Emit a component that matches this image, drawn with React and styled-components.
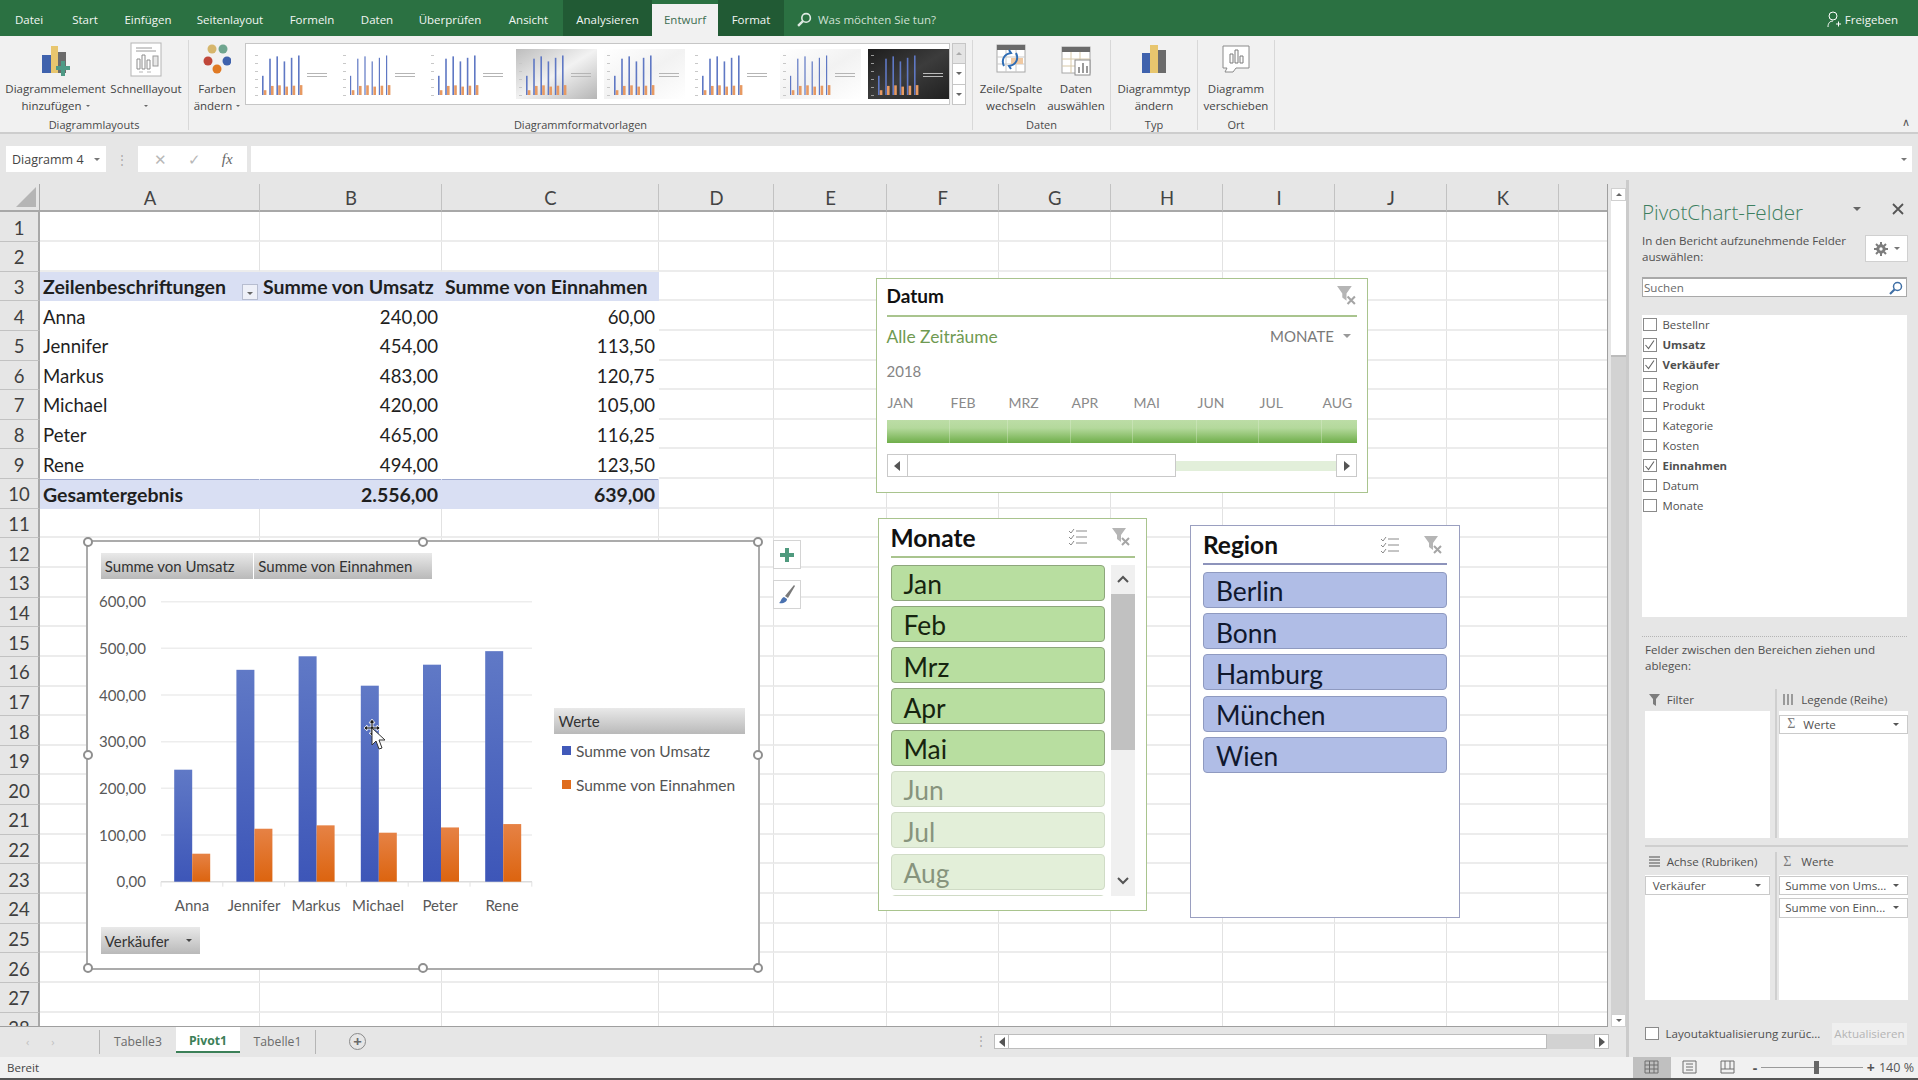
import React from 'react';
import styled, { createGlobalStyle } from 'styled-components';

const uiFont = `"Open Sans", "Noto Sans", sans-serif`;
const cellFont = `Lato, "Liberation Sans", sans-serif`;

const GlobalStyle = createGlobalStyle`
  * { box-sizing: border-box; }
  html, body { margin: 0; padding: 0; background: #e6e6e6; }
  body { width: 1918px; height: 1080px; overflow: hidden; font-family: ${uiFont}; }
`;

const Page = styled.div`
  width: 1918px;
  height: 1080px;
  display: flex;
  flex-direction: column;
  overflow: hidden;
`;

/* ---------- title tabs ---------- */
const TabBar = styled.div`
  height: 36px;
  display: flex;
  background: #2b7142;
  color: #f2f6f3;
  font-size: 11.5px;
  flex: none;
`;

const MenuTab = styled.div`
  width: ${(p) => p.$w}px;
  display: flex;
  align-items: center;
  justify-content: center;
  padding-top: 2px;
  background: ${(p) => (p.$tone === 'dark' ? '#215a34' : 'transparent')};
  ${(p) => p.$tone === 'active' && `
    background: #f1f1f1;
    color: #3e6e52;
    margin-top: 4px;
    padding-top: 0;
    padding-bottom: 2px;
  `}
`;

const TellMe = styled.div`
  display: flex;
  align-items: center;
  gap: 6px;
  margin-left: 13px;
  padding-top: 2px;
  color: #cfe0d4;
  flex: 1;
`;

const Share = styled.div`
  display: flex;
  align-items: center;
  gap: 4px;
  margin-right: 20px;
  padding-top: 2px;
`;

/* ---------- ribbon ---------- */
const Ribbon = styled.div`
  height: 98px;
  flex: none;
  display: flex;
  background: #f1f1f1;
  border-bottom: 2px solid #cdcdcd;
  padding-top: 4px;
  color: #444;
  position: relative;
`;

const RibbonGroup = styled.div`
  width: ${(p) => p.$w}px;
  height: 90px;
  display: flex;
  flex-direction: column;
  border-right: 1px solid #d8d8d8;
`;

const GroupBody = styled.div`
  height: 72px;
  display: flex;
  align-items: flex-start;
  padding-left: ${(p) => p.$pad || 0}px;
  gap: ${(p) => p.$gap || 0}px;
`;

const GroupLabel = styled.div`
  flex: 1;
  text-align: center;
  font-size: 11px;
  line-height: 17px;
  padding-top: 4px;
  color: #4a4a4a;
`;

const RibbonButton = styled.div`
  width: ${(p) => p.$w}px;
  display: flex;
  flex-direction: column;
  align-items: center;
  font-size: 11.5px;
  line-height: 17px;
  text-align: center;
  white-space: nowrap;
`;

const ButtonLine = styled.span`
  display: flex;
  align-items: center;
  justify-content: center;
  gap: 4px;
  height: 17px;
`;

const IconSlot = styled.div`
  height: 39px;
  display: flex;
  align-items: flex-end;
  justify-content: center;
  margin-bottom: 1px;
  padding-bottom: ${(p) => p.$lift || 0}px;
`;

const Gallery = styled.div`
  width: 721px;
  height: 62px;
  margin-top: 3px;
  display: flex;
`;

const GalleryStrip = styled.div`
  width: 705px;
  display: flex;
  align-items: center;
  gap: 7px;
  padding-left: 6px;
  background: #fff;
  border: 1px solid #c6c6c6;
`;

const GalleryScroll = styled.div`
  flex: 1;
  margin-left: 2px;
  display: flex;
  flex-direction: column;
  border: 1px solid #c6c6c6;
  background: #fff;
`;

const GalleryStep = styled.div`
  flex: 1;
  display: flex;
  align-items: center;
  justify-content: center;
  background: ${(p) => (p.$off ? '#e4e4e4' : '#fff')};
  & + & { border-top: 1px solid #c6c6c6; }
`;

const Caret = styled.span`
  display: inline-block;
  width: 0;
  height: 0;
  border-left: ${(p) => p.$size || 4}px solid transparent;
  border-right: ${(p) => p.$size || 4}px solid transparent;
  ${(p) => (p.$up ? 'border-bottom' : 'border-top')}: ${(p) => p.$size || 4}px solid ${(p) => p.$color || '#666'};
  flex: none;
`;

const Collapse = styled.div`
  position: absolute;
  right: 8px;
  bottom: 3px;
  font-size: 11px;
  color: #555;
`;

/* ---------- formula bar ---------- */
const FormulaBar = styled.div`
  height: 46px;
  flex: none;
  display: flex;
  align-items: flex-start;
  padding: 12px 0 0 6px;
  background: #e6e6e6;
`;

const NameBox = styled.div`
  width: 100px;
  height: 26px;
  background: #fff;
  display: flex;
  align-items: center;
  justify-content: space-between;
  padding: 0 6px;
  font-size: 12.5px;
  color: #444;
`;

const Dots = styled.div`
  width: 32px;
  height: 26px;
  display: flex;
  align-items: center;
  justify-content: center;
  color: #aaa;
  font-size: 12px;
  letter-spacing: 0;
`;

const FormulaTools = styled.div`
  width: 109px;
  height: 26px;
  background: #fff;
  display: flex;
  align-items: center;
  justify-content: space-around;
  padding: 0 4px 0 6px;
  color: #b8b8b8;
  font-size: 15px;
  margin-right: 4px;
`;

const FxLabel = styled.span`
  font-family: "Liberation Serif", serif;
  font-style: italic;
  color: #666;
  font-size: 15px;
`;

const FormulaInput = styled.div`
  width: 1661px;
  height: 26px;
  background: #fff;
  display: flex;
  align-items: center;
  justify-content: flex-end;
  padding-right: 5px;
`;

/* ---------- worksheet ---------- */
const Workspace = styled.div`
  height: 876.7px;
  flex: none;
  display: flex;
`;

const SheetArea = styled.div`
  width: 1626px;
  display: flex;
  flex-direction: column;
  padding-top: 4px;
`;

const SheetRow = styled.div`
  display: flex;
  height: 842.7px;
  flex: none;
`;

const SheetGrid = styled.div`
  position: relative;
  width: 1608px;
  height: 100%;
  overflow: hidden;
  background: #fff;
  border-right: 1px solid #9f9f9f;
  border-bottom: 1px solid #9f9f9f;
  display: grid;
  grid-template-columns: 40px 220px 182px 217px 115px 113px 111.5px 112.5px 112px 112px 112px 112px 49px;
  grid-template-rows: 28.3px repeat(28, 29.65px);
  align-content: start;
  font-family: ${cellFont};
`;

const Corner = styled.div`
  background: #e6e6e6;
  border-right: 1px solid #a8a8a8;
  border-bottom: 2px solid #a8a8a8;
  position: relative;
  &::after {
    content: '';
    position: absolute;
    right: 3px;
    bottom: 3px;
    border-left: 20px solid transparent;
    border-bottom: 20px solid #b5b5b5;
  }
`;

const ColHead = styled.div`
  background: #e6e6e6;
  border-right: 1px solid #c2c2c2;
  border-bottom: 2px solid #a8a8a8;
  display: flex;
  align-items: center;
  justify-content: center;
  padding: 1px 0 0 1px;
  font-size: 18.5px;
  color: #444;
`;

const RowHead = styled.div`
  background: #e6e6e6;
  border-right: 2px solid #a8a8a8;
  border-bottom: 1px solid #c2c2c2;
  display: flex;
  align-items: center;
  justify-content: center;
  padding-top: 2px;
  font-size: 18.5px;
  color: #3f3f3f;
`;

const cellFill = (p) => (p.$band ? '#d9dff3' : p.$plain ? '#fff' : null);

const Cell = styled.div`
  display: flex;
  align-items: center;
  justify-content: ${(p) => (p.$right ? 'flex-end' : 'flex-start')};
  padding: 3px 3px 0;
  font-size: ${(p) => (p.$bold ? 19.5 : 18.6)}px;
  white-space: nowrap;
  color: #1f1f1f;
  font-weight: ${(p) => (p.$bold ? 700 : 400)};
  background: ${(p) => cellFill(p) || 'transparent'};
  border-right: 1px solid ${(p) => cellFill(p) || '#e2e2e2'};
  border-bottom: 2px solid ${(p) => cellFill(p) || '#ececec'};
  ${(p) => p.$topRule && 'box-shadow: inset 0 1px 0 #a0abd0;'}
  position: relative;
`;

const FilterChip = styled.span`
  position: absolute;
  right: 1px;
  top: 12px;
  width: 16px;
  height: 16px;
  background: #eef0f8;
  border: 1px solid #b7bdd0;
  display: flex;
  align-items: center;
  justify-content: center;
  padding-top: 3px;
`;

const VScroll = styled.div`
  width: 15px;
  margin-left: 3px;
  margin-top: 4px;
  display: flex;
  flex-direction: column;
  background: #d2d2d2;
`;

const ScrollStep = styled.div`
  height: 13px;
  flex: none;
  background: #fff;
  border: 1px solid #d0d0d0;
  display: flex;
  align-items: center;
  justify-content: center;
`;

const VThumb = styled.div`
  height: 156px;
  flex: none;
  background: #fff;
  border-bottom: 2px solid #bcbcbc;
`;

const Spring = styled.div`
  flex: 1;
`;

/* ---------- pivot chart ---------- */
const ChartBox = styled.div`
  position: absolute;
  left: 86.4px;
  top: 356px;
  width: 674px;
  height: 429.5px;
  background: #fff;
  border: 2px solid #ababab;
  padding: 10.7px 0 0 12.4px;
  display: flex;
  flex-direction: column;
`;

const Handle = styled.div`
  position: absolute;
  left: ${(p) => p.$x}%;
  top: ${(p) => p.$y}%;
  width: 10px;
  height: 10px;
  transform: translate(-50%, -50%);
  border: 2px solid #8f8f8f;
  border-radius: 50%;
  background: #fff;
`;

const FieldRow = styled.div`
  display: flex;
  gap: 1.5px;
  height: 26.3px;
  flex: none;
`;

const FieldButton = styled.div`
  width: ${(p) => p.$w}px;
  height: ${(p) => p.$h || 26.3}px;
  flex: none;
  display: flex;
  align-items: center;
  justify-content: space-between;
  padding: 0 ${(p) => p.$pr || 4}px 0 4px;
  background: linear-gradient(#e9e9e9, #b9b9b9);
  font-size: 15px;
  color: #333;
  white-space: nowrap;
`;

const PlotRow = styled.div`
  display: flex;
  height: 335px;
  margin-top: 6px;
  flex: none;
`;

const PlotSvg = styled.svg`
  flex: none;
  overflow: visible;
  font-family: ${cellFont};
`;

const Legend = styled.div`
  margin-left: 13.7px;
  padding-top: 122.7px;
  display: flex;
  flex-direction: column;
`;

const LegendItem = styled.div`
  display: flex;
  align-items: center;
  gap: 5px;
  margin: ${(p) => p.$mt}px 0 0 8px;
  height: 20px;
  font-size: 15.5px;
  color: #555;
  white-space: nowrap;
`;

const LegendSwatch = styled.span`
  width: 8.5px;
  height: 9px;
  background: ${(p) => p.$color};
`;

const AxisButtonWrap = styled.div`
  margin-top: 7px;
`;

const ChartTool = styled.div`
  position: absolute;
  left: 773px;
  top: ${(p) => p.$top}px;
  width: 28px;
  height: 29px;
  background: #fff;
  border: 1px solid #d4d4d4;
  display: flex;
  align-items: center;
  justify-content: center;
`;

const PointerLayer = styled.svg`
  position: absolute;
  left: 364px;
  top: 534px;
`;

/* ---------- slicers ---------- */
const Slicer = styled.div`
  position: absolute;
  left: ${(p) => p.$x}px;
  top: ${(p) => p.$y}px;
  width: ${(p) => p.$w}px;
  height: ${(p) => p.$h}px;
  background: #fff;
  border: 1.5px solid ${(p) => p.$line};
  padding: 0 ${(p) => p.$pad || 11.5}px;
  display: flex;
  flex-direction: column;
  overflow: hidden;
`;

const SlicerHead = styled.div`
  height: ${(p) => p.$h}px;
  flex: none;
  display: flex;
  align-items: center;
  justify-content: space-between;
  border-bottom: 2px solid ${(p) => p.$line};
  padding-bottom: ${(p) => p.$pb || 0}px;
  font-weight: 700;
  font-size: ${(p) => p.$size}px;
  color: #111;
`;

const SlicerTools = styled.div`
  display: flex;
  align-items: center;
  gap: 24px;
  margin-right: 4px;
`;

const PeriodRow = styled.div`
  display: flex;
  justify-content: space-between;
  align-items: center;
  margin-top: 9px;
  height: 20px;
  font-size: 17.4px;
  color: #6f9a52;
`;

const LevelPick = styled.div`
  display: flex;
  align-items: center;
  gap: 9px;
  font-size: 15px;
  color: #7a7a7a;
  margin-right: 6px;
`;

const YearLabel = styled.div`
  margin-top: 15px;
  height: 20px;
  line-height: 20px;
  font-size: 15px;
  color: #858585;
`;

const MonthRow = styled.div`
  height: 20px;
  margin-top: 13px;
  padding-left: 1px;
  font-size: 14px;
  color: #8a8a8a;
  display: grid;
  grid-template-columns: 63px 58px 63px 62px 64px 62px 63px 1fr;
`;

const MonthBar = styled.div`
  margin-top: 6px;
  height: 23px;
  flex: none;
  display: grid;
  grid-template-columns: 63px 58px 63px 62px 64px 62px 63px 1fr;
  background: linear-gradient(#bcdda6, #b4d99c 35%, #6fae4a);
`;

const MonthTick = styled.div`
  border-right: 1px solid rgba(225, 240, 214, 0.35);
  &:last-child { border-right: none; }
`;

const TimeScroll = styled.div`
  margin-top: 11px;
  height: 23px;
  flex: none;
  display: flex;
  align-items: center;
`;

const TimeButton = styled.div`
  width: 21px;
  height: 23px;
  flex: none;
  background: #fff;
  border: 1px solid #c9c9c9;
  display: flex;
  align-items: center;
  justify-content: center;
`;

const TimeThumb = styled.div`
  width: 268px;
  height: 23px;
  background: #fff;
  border: 1px solid #c9c9c9;
  border-left: none;
`;

const TimeTrack = styled.div`
  flex: 1;
  height: 10px;
  background: #e2efda;
`;

const SideArrow = styled.span`
  display: inline-block;
  width: 0;
  height: 0;
  border-top: 5px solid transparent;
  border-bottom: 5px solid transparent;
  ${(p) => (p.$left ? 'border-right' : 'border-left')}: 6px solid #555;
`;

const SlicerBody = styled.div`
  display: flex;
  gap: 6px;
  margin-top: 7px;
  flex: none;
  height: 331px;
  overflow: hidden;
`;

const ItemList = styled.div`
  width: ${(p) => p.$w}px;
  display: flex;
  flex-direction: column;
  gap: 5.3px;
`;

const SlicerItem = styled.div`
  height: 36px;
  flex: none;
  display: flex;
  align-items: center;
  padding: 3px 0 0 12px;
  border-radius: 4px;
  background: ${(p) => p.$bg};
  border: 1px solid ${(p) => p.$line};
  font-size: 26.4px;
  color: ${(p) => p.$color};
`;

const ItemScroll = styled.div`
  width: 24.4px;
  display: flex;
  flex-direction: column;
  background: #f0f0f0;
  align-items: center;
`;

const ItemStep = styled.div`
  height: ${(p) => p.$h}px;
  flex: none;
  display: flex;
  align-items: center;
  justify-content: center;
  width: 100%;
`;

const ItemThumb = styled.div`
  width: 100%;
  height: 156px;
  flex: none;
  background: #c1c1c1;
`;

/* ---------- field panel ---------- */
const Panel = styled.div`
  width: 292px;
  border-left: 3px solid #cbcbcb;
  background: #e6e6e6;
  padding-left: 13px;
  display: flex;
  flex-direction: column;
  color: #505050;
  font-size: 11.6px;
  position: relative;
`;

const PanelTitleRow = styled.div`
  height: 24px;
  margin-top: 20px;
  display: flex;
  align-items: center;
  justify-content: space-between;
  padding-right: 14px;
  flex: none;
`;

const PanelTitle = styled.div`
  font-size: 20.7px;
  font-weight: 300;
  color: #3d7f5f;
  white-space: nowrap;
`;

const PanelActions = styled.div`
  display: flex;
  align-items: center;
  gap: 31px;
  margin-top: -7px;
`;

const IntroRow = styled.div`
  margin-top: 9px;
  height: 32px;
  display: flex;
  justify-content: space-between;
  padding-right: 10px;
  flex: none;
`;

const Intro = styled.div`
  line-height: 16px;
  white-space: nowrap;
`;

const GearButton = styled.div`
  width: 43px;
  height: 27px;
  margin-top: 2px;
  background: #fff;
  border: 1px solid #d0d0d0;
  display: flex;
  align-items: center;
  justify-content: center;
  gap: 6px;
`;

const SearchBox = styled.div`
  width: 265px;
  height: 20px;
  margin-top: 12px;
  flex: none;
  background: #fff;
  border: 1px solid #a9a9a9;
  border-top-width: 2px;
  display: flex;
  align-items: center;
  justify-content: space-between;
  padding: 0 3px 0 1px;
  color: #6a6a6a;
`;

const FieldList = styled.div`
  width: 265px;
  height: 302px;
  margin-top: 17.7px;
  flex: none;
  background: #fff;
  padding-left: 1px;
  display: flex;
  flex-direction: column;
`;

const FieldItem = styled.div`
  height: 20.1px;
  flex: none;
  display: flex;
  align-items: center;
  gap: 6px;
  font-size: 11.4px;
  font-weight: ${(p) => (p.$on ? 700 : 400)};
  color: #4f4f4f;
`;

const Check = styled.span`
  width: 13.5px;
  height: 13.5px;
  flex: none;
  background: #fff;
  border: 1px solid #8a8a8a;
  display: flex;
  align-items: center;
  justify-content: center;
`;

const DottedRule = styled.div`
  width: 265px;
  margin-top: 19px;
  height: 1px;
  flex: none;
  border-top: 1px dotted #b5b5b5;
`;

const HintText = styled.div`
  margin: 5px 0 0 3px;
  line-height: 16px;
  flex: none;
  white-space: nowrap;
`;

const AreaGrid = styled.div`
  display: grid;
  grid-template-columns: 125.5px 133px;
  column-gap: 5px;
  margin: 15px 0 0 2.7px;
  flex: none;
`;

const AreaBlock = styled.div`
  display: flex;
  flex-direction: column;
  ${(p) => p.$side && 'border-left: 2px solid #cfcfcf; padding-left: 2px;'}
`;

const AreaLabel = styled.div`
  height: ${(p) => p.$h}px;
  display: flex;
  align-items: center;
  gap: 7px;
  padding: 0 0 ${(p) => p.$pb || 0}px 4px;
  white-space: nowrap;
  flex: none;
`;

const AreaWell = styled.div`
  height: ${(p) => p.$h}px;
  background: #fff;
  display: flex;
  flex-direction: column;
  gap: 3px;
  padding-top: ${(p) => p.$pt}px;
  flex: none;
`;

const AreaItem = styled.div`
  height: 19.5px;
  flex: none;
  display: flex;
  align-items: center;
  justify-content: space-between;
  background: #fff;
  border: 1px solid #cacaca;
  padding: 0 8px 0 ${(p) => p.$pl || 7}px;
  white-space: nowrap;
`;

const AreaItemText = styled.span`
  display: flex;
  gap: 5px;
  align-items: center;
`;

const AreaRule = styled.div`
  grid-column: 1 / -1;
  height: 2px;
  margin: 7px 0 5px;
  background: #cfcfcf;
`;

const PanelFoot = styled.div`
  margin: 23px 0 0 3px;
  width: 262px;
  display: flex;
  align-items: center;
  justify-content: space-between;
  flex: none;
`;

const FootLabel = styled.div`
  display: flex;
  align-items: center;
  gap: 7px;
  white-space: nowrap;
`;

const RefreshButton = styled.div`
  width: 75px;
  height: 22px;
  background: #efefef;
  color: #b5b5b5;
  display: flex;
  align-items: center;
  justify-content: center;
`;

/* ---------- sheet tabs ---------- */
const TabStrip = styled.div`
  height: 30px;
  flex: none;
  display: flex;
  align-items: center;
  background: #e6e6e6;
  color: #6b6b6b;
  font-size: 12.2px;
`;

const NavArrows = styled.div`
  width: 100px;
  display: flex;
  gap: 22px;
  padding-left: 26px;
  color: #c0c0c0;
  font-size: 11px;
  border-right: 1px solid #b5b5b5;
  height: 24px;
  align-items: center;
`;

const SheetTab = styled.div`
  width: ${(p) => p.$w}px;
  height: 30px;
  display: flex;
  align-items: center;
  justify-content: center;
  ${(p) => p.$active && `
    background: #fff;
    color: #3c8058;
    font-weight: 700;
    border-bottom: 2px solid #3c8058;
    height: 26px;
    padding-top: 3px;
    align-self: flex-start;
  `}
`;

const TabDivider = styled.div`
  width: 1px;
  height: 24px;
  background: #b5b5b5;
`;

const AddSheet = styled.div`
  margin-left: 33px;
  width: 17px;
  height: 17px;
  border: 1.5px solid #8a8a8a;
  border-radius: 50%;
  display: flex;
  align-items: center;
  justify-content: center;
  font-size: 15px;
  line-height: 1;
  color: #6a6a6a;
  font-weight: 700;
`;

const HScroll = styled.div`
  width: 615px;
  margin-left: auto;
  margin-right: 17px;
  display: flex;
  align-items: center;
  position: relative;
  height: 15px;
  background: #d2d2d2;
`;

const HDots = styled.div`
  position: absolute;
  left: -19px;
  top: 0;
  color: #a8a8a8;
  font-size: 12px;
  line-height: 13px;
`;

const HButton = styled.div`
  width: 15px;
  height: 15px;
  flex: none;
  background: #fff;
  border: 1px solid #bdbdbd;
  display: flex;
  align-items: center;
  justify-content: center;
`;

const HThumb = styled.div`
  width: 538px;
  height: 15px;
  background: #fff;
  border: 1px solid #bdbdbd;
  border-left: none;
`;

const HTrack = styled.div`
  flex: 1;
`;

/* ---------- status bar ---------- */
const StatusBar = styled.div`
  flex: 1;
  display: flex;
  align-items: center;
  background: #f1f1f1;
  border-bottom: 2px solid #555;
  padding-left: 7px;
  font-size: 11.5px;
  color: #444;
`;

const StatusRight = styled.div`
  margin-left: auto;
  display: flex;
  align-items: center;
  height: 100%;
  color: #555;
`;

const ViewButton = styled.div`
  width: 38px;
  height: 100%;
  display: flex;
  align-items: center;
  justify-content: center;
  background: ${(p) => (p.$active ? '#c0c0c0' : 'transparent')};
`;

const Zoomer = styled.div`
  display: flex;
  align-items: center;
  width: 122px;
  margin-left: 6px;
  font-size: 14px;
  font-weight: 700;
  gap: 4px;
`;

const ZoomTrack = styled.div`
  flex: 1;
  height: 1px;
  background: #9a9a9a;
  position: relative;
`;

const ZoomKnob = styled.div`
  position: absolute;
  left: 53px;
  top: -6px;
  width: 5px;
  height: 13px;
  background: #666;
`;

const ZoomValue = styled.div`
  width: 43.3px;
  text-align: right;
  padding-right: 4px;
  font-size: 12.5px;
  white-space: nowrap;
`;

/* ---------- drawings ---------- */
const sellers = ['Anna', 'Jennifer', 'Markus', 'Michael', 'Peter', 'Rene'];
const umsatz = [240, 454, 483, 420, 465, 494];
const einnahmen = [60, 113.5, 120.75, 105, 116.25, 123.5];

const PlusBars = () => (
  <svg width="30" height="33" viewBox="0 0 30 33">
    <rect x="1" y="11" width="9" height="18" fill="#3f62ad" />
    <rect x="10" y="2" width="7" height="27" fill="#e8c66e" />
    <rect x="17" y="8" width="8" height="21" fill="#6b6b6b" />
    <path d="M20 17h4v5h5v4h-5v6h-4v-6h-5v-4h5z" fill="#4f9a86" />
  </svg>
);

const QuickLayout = () => (
  <svg width="32" height="35" viewBox="0 0 32 35">
    <rect x="1" y="1" width="30" height="33" fill="#fff" stroke="#b5b5b5" />
    <path d="M6 6h16M6 9h20" stroke="#9a9a9a" />
    <path d="M7 27V17h3v10zM12 27V13h3v14zM17 27V18h3v9z" fill="#fff" stroke="#8c8c8c" />
    <rect x="23" y="14" width="5" height="10" fill="#e8e8e8" stroke="#9a9a9a" />
    <path d="M9 30h4M17 30h4" stroke="#b5b5b5" />
  </svg>
);

const Palette = () => (
  <svg width="28" height="33" viewBox="0 0 28 33">
    <circle cx="9" cy="7" r="4.5" fill="#d6b66c" />
    <circle cx="20" cy="7" r="4.5" fill="#6fa58f" />
    <circle cx="5" cy="19" r="4.5" fill="#c0473a" />
    <circle cx="24" cy="19" r="4.5" fill="#3f62ad" />
    <circle cx="14" cy="27" r="4.5" fill="#e07a24" />
  </svg>
);

const SwapTable = () => (
  <svg width="30" height="29" viewBox="0 0 30 29">
    <rect x="1" y="1" width="28" height="27" fill="#fff" stroke="#a8a8a8" />
    <rect x="1" y="1" width="28" height="5" fill="#6a6a6a" />
    <path d="M1 13h28M1 20h28M10 6v22M20 6v22" stroke="#c9c9c9" />
    <rect x="15" y="14" width="12" height="6" fill="#f0c9a2" />
    <path d="M8 22c-3-6 0-12 7-13l-2-3M20 9c3 6 0 12-7 13l2 3" fill="none" stroke="#2f6db5" strokeWidth="2" />
  </svg>
);

const PickData = () => (
  <svg width="30" height="30" viewBox="0 0 30 30">
    <rect x="1" y="1" width="28" height="26" fill="#fff" stroke="#a8a8a8" />
    <rect x="1" y="1" width="28" height="5" fill="#6a6a6a" />
    <path d="M1 13h28M1 20h28M10 6v21M19 6v21" stroke="#d8c9a8" />
    <rect x="14" y="14" width="15" height="15" fill="#fff" stroke="#8c8c8c" />
    <path d="M17 27v-6h2v6zM21 27v-10h2v10zM25 27v-7h2v7z" fill="#9a9a9a" />
  </svg>
);

const TypeBars = () => (
  <svg width="24" height="28" viewBox="0 0 24 28">
    <rect x="0" y="8" width="8" height="20" fill="#3f62ad" />
    <rect x="8" y="0" width="8" height="28" fill="#e8c66e" />
    <rect x="16" y="5" width="8" height="23" fill="#6b6b6b" />
  </svg>
);

const MoveChart = () => (
  <svg width="28" height="28" viewBox="0 0 28 28">
    <path d="M1 1h26v22H14l-3 4H3l2-4H1z" fill="#fff" stroke="#8a8a8a" />
    <path d="M8 18V9h3v9zM13 18V5h3v13zM18 18v-7h3v7z" fill="#fff" stroke="#7a7a7a" />
  </svg>
);

const ThumbChart = ({ mode, spread }) => {
  const dark = mode === 'dark';
  const bg = dark ? '#2b2b2b' : mode === 'shade' ? '#d2d2d2' : '#fff';
  const id = `t${mode}${spread}`;
  return (
    <svg width="81" height="50" viewBox="0 0 81 50" style={{ flex: 'none' }}>
      <defs>
        <linearGradient id={id} x1="0" y1="0" x2="1" y2="1">
          <stop offset="0" stopColor={dark ? '#1d1d1d' : mode === 'shade' ? '#bdbdbd' : '#fff'} />
          <stop offset="0.5" stopColor={dark ? '#3c3c3c' : '#f2f2f2'} />
          <stop offset="1" stopColor={dark ? '#202020' : mode === 'shade' ? '#b5b5b5' : '#fff'} />
        </linearGradient>
      </defs>
      <rect width="81" height="50" fill={mode === 'plain' ? bg : `url(#${id})`} />
      {[6, 14, 22, 30, 38, 46].map((y) => (
        <rect key={y} x="3" y={y} width="3" height="1" fill={dark ? '#999' : '#c8c8c8'} />
      ))}
      {umsatz.map((v, i) => (
        <rect key={i} x={10 + i * 7.2} y={46 - v * 0.08} width={spread ? 1.2 : 1.6} height={v * 0.08} fill="#5f78c4" />
      ))}
      {einnahmen.map((v, i) => (
        <rect key={i} x={11.8 + i * 7.2} y={46 - v * 0.08} width="2.6" height={v * 0.08} fill="#e79a63" />
      ))}
      <path d="M55 24.5h20M55 27.5h20" stroke={dark ? '#bbb' : '#b5b5b5'} strokeWidth="1" />
    </svg>
  );
};

const MoveCursor = () => (
  <PointerLayer width="24" height="34" viewBox="0 0 24 34">
    <path d="M6 0l3 4H7v4h4V6l3 3-3 3v-2H7v4h2l-3 3-3-3h2v-4H1v2l-3-3 3-3v2h4V4H3z" fill="#1b1b1b" stroke="#fff" strokeWidth="0.8" transform="translate(2 1)" />
    <path d="M8 10v17l4-4 3 8 3-1-3-8h6z" fill="#fff" stroke="#333" strokeWidth="1" />
  </PointerLayer>
);

const PivotPlot = () => {
  const base = 296.7;
  const unit = 0.4667;
  return (
    <PlotSvg width="440" height="335" viewBox="0 0 440 335">
      <defs>
        <linearGradient id="blueBar" x1="0" y1="0" x2="0" y2="1">
          <stop offset="0" stopColor="#6079c6" />
          <stop offset="1" stopColor="#3d56b8" />
        </linearGradient>
        <linearGradient id="orangeBar" x1="0" y1="0" x2="0" y2="1">
          <stop offset="0" stopColor="#e68245" />
          <stop offset="1" stopColor="#dc640f" />
        </linearGradient>
      </defs>
      {[0, 100, 200, 300, 400, 500, 600].map((v) => (
        <g key={v}>
          <line x1="60" x2="431" y1={base - v * unit} y2={base - v * unit} stroke={v === 0 ? '#dcdcdc' : '#ededed'} strokeWidth="1.5" />
          <text x="45" y={base - v * unit + 5.5} textAnchor="end" fontSize="15" fill="#595959">
            {v},00
          </text>
        </g>
      ))}
      {[0, 1, 2, 3, 4, 5, 6].map((i) => (
        <line key={i} x1={60 + i * 61.8} x2={60 + i * 61.8} y1={base} y2={base + 5} stroke="#e2e2e2" />
      ))}
      {sellers.map((name, i) => (
        <g key={name}>
          <rect x={73.2 + i * 62.2} y={base - umsatz[i] * unit} width="18" height={umsatz[i] * unit} fill="url(#blueBar)" />
          <rect x={91.2 + i * 62.2} y={base - einnahmen[i] * unit} width="18" height={einnahmen[i] * unit} fill="url(#orangeBar)" />
          <text x={91 + i * 62} y="326" textAnchor="middle" fontSize="15" fill="#595959">
            {name}
          </text>
        </g>
      ))}
    </PlotSvg>
  );
};

const ClearFilter = ({ size = 20 }) => (
  <svg width={size} height={size} viewBox="0 0 20 20">
    <path d="M1 1h14L10 8v7L6 12V8z" fill="#b5b5b5" />
    <path d="M11 11l7 7M18 11l-7 7" stroke="#a5a5a5" strokeWidth="2" />
  </svg>
);

const MultiSelect = () => (
  <svg width="19" height="18" viewBox="0 0 19 18" fill="none" stroke="#8a8a8a">
    <path d="M8 3h11M8 9h11M8 15h11" />
    <path d="M1 3l2 2 3-4M1 9l2 2 3-4M1 15l2 2 3-4" />
  </svg>
);

const Tick = () => (
  <svg width="11" height="11" viewBox="0 0 11 11">
    <path d="M1.5 6l3 3.5L10 1.5" fill="none" stroke="#666" strokeWidth="1.1" />
  </svg>
);

const Gear = () => (
  <svg width="14" height="14" viewBox="0 0 14 14">
    <circle cx="7" cy="7" r="3.2" fill="none" stroke="#7d7d7d" strokeWidth="3" />
    <path d="M7 0v3M7 11v3M0 7h3M11 7h3M2 2l2 2M10 10l2 2M12 2l-2 2M4 10l-2 2" stroke="#7d7d7d" strokeWidth="2" />
  </svg>
);

const Lens = ({ color = '#3f6fa5', size = 14 }) => (
  <svg width={size} height={size} viewBox="0 0 14 14" fill="none" stroke={color}>
    <circle cx="8.5" cy="5.5" r="4" strokeWidth="1.5" />
    <path d="M5.5 8.5L1 13" strokeWidth="2.2" />
  </svg>
);

const FunnelIcon = () => (
  <svg width="11" height="12" viewBox="0 0 11 12">
    <path d="M0 0h11L7 5v7L4 10V5z" fill="#7d7d7d" />
  </svg>
);

const ColumnsIcon = () => (
  <svg width="11" height="11" viewBox="0 0 11 11">
    <path d="M0 0h2v11H0zM4 0h2v11H4zM8 0h2v11H8z" fill="#9a9a9a" />
  </svg>
);

const RowsIcon = () => (
  <svg width="11" height="11" viewBox="0 0 11 11">
    <path d="M0 0h11v2H0zM0 3h11v2H0zM0 6h11v2H0zM0 9h11v2H0z" fill="#9a9a9a" />
  </svg>
);

const Sum = styled.span`
  font-family: "Liberation Serif", serif;
  font-size: 14px;
  color: #7a7a7a;
  width: 11px;
`;

const GridIcon = () => (
  <svg width="15" height="14" viewBox="0 0 15 14" fill="none" stroke="#6f6f6f">
    <path d="M1 1h13v12H1zM1 5h13M1 9h13M5.5 1v12M10 1v12" />
  </svg>
);

const PageIcon = () => (
  <svg width="15" height="14" viewBox="0 0 15 14" fill="none" stroke="#6f6f6f">
    <path d="M1 1h13v12H1zM4 4h7M4 7h7M4 10h7" />
  </svg>
);

const BreakIcon = () => (
  <svg width="15" height="14" viewBox="0 0 15 14" fill="none" stroke="#6f6f6f">
    <path d="M1 1h13v12H1zM1 9h13M5 1v8M10 1v8" />
  </svg>
);

const ShareIcon = () => (
  <svg width="14" height="17" viewBox="0 0 14 17" fill="none" stroke="#fff">
    <circle cx="6" cy="5" r="4" />
    <path d="M1 16c0-4 2-6 5-6M9 13h5M11.5 10.5v5" />
  </svg>
);

const Brush = () => (
  <svg width="18" height="20" viewBox="0 0 18 20">
    <path d="M16 0l1 1-7 12-3-2z" fill="#7a7a7a" />
    <path d="M6 12l3 2c0 3-4 5-8 4 2-1 2-5 5-6z" fill="#4a72b0" />
  </svg>
);

/* ---------- sheet data ---------- */
const columns = ['A', 'B', 'C', 'D', 'E', 'F', 'G', 'H', 'I', 'J', 'K', ''];

const pivotRows = {
  3: ['Zeilenbeschriftungen', 'Summe von Umsatz', 'Summe von Einnahmen'],
  4: ['Anna', '240,00', '60,00'],
  5: ['Jennifer', '454,00', '113,50'],
  6: ['Markus', '483,00', '120,75'],
  7: ['Michael', '420,00', '105,00'],
  8: ['Peter', '465,00', '116,25'],
  9: ['Rene', '494,00', '123,50'],
  10: ['Gesamtergebnis', '2.556,00', '639,00'],
};

const menuTabs = [
  ['Datei', 58],
  ['Start', 54],
  ['Einfügen', 72],
  ['Seitenlayout', 92],
  ['Formeln', 72],
  ['Daten', 58],
  ['Überprüfen', 88],
  ['Ansicht', 69],
  ['Analysieren', 89, 'dark'],
  ['Entwurf', 66, 'active'],
  ['Format', 66, 'dark'],
];

const thumbs = [
  ['plain', false],
  ['plain', true],
  ['plain', false],
  ['shade', false],
  ['soft', false],
  ['plain', false],
  ['soft', true],
  ['dark', false],
];

const fields = [
  ['Bestellnr', false],
  ['Umsatz', true],
  ['Verkäufer', true],
  ['Region', false],
  ['Produkt', false],
  ['Kategorie', false],
  ['Kosten', false],
  ['Einnahmen', true],
  ['Datum', false],
  ['Monate', false],
];

const monthNames = ['JAN', 'FEB', 'MRZ', 'APR', 'MAI', 'JUN', 'JUL', 'AUG'];
const months = ['Jan', 'Feb', 'Mrz', 'Apr', 'Mai', 'Jun', 'Jul', 'Aug', ''];
const regions = ['Berlin', 'Bonn', 'Hamburg', 'München', 'Wien'];
const handles = [
  [0, 0],
  [50, 0],
  [100, 0],
  [0, 50],
  [100, 50],
  [0, 100],
  [50, 100],
  [100, 100],
];

const SheetCells = () => {
  const out = [<Corner key="corner" />];
  columns.forEach((c, i) => out.push(<ColHead key={`h${i}`}>{c}</ColHead>));
  for (let r = 1; r <= 28; r++) {
    out.push(<RowHead key={`r${r}`}>{r}</RowHead>);
    columns.forEach((c, i) => {
      const row = pivotRows[r];
      const inPivot = row && i < 3;
      const band = inPivot && (r === 3 || r === 10);
      out.push(
        <Cell
          key={`${r}-${i}`}
          $band={band}
          $plain={inPivot && !band}
          $bold={band}
          $right={inPivot && i > 0 && r !== 3}
          $topRule={inPivot && r === 10}
        >
          {inPivot ? row[i] : ''}
          {r === 3 && i === 0 && (
            <FilterChip>
              <Caret $size={3} />
            </FilterChip>
          )}
        </Cell>
      );
    });
  }
  return out;
};

const App = () => (
  <Page>
    <GlobalStyle />
    <TabBar>
      {menuTabs.map(([label, w, tone]) => (
        <MenuTab key={label} $w={w} $tone={tone}>
          {label}
        </MenuTab>
      ))}
      <TellMe>
        <Lens color="#dfeae3" size={15} />
        Was möchten Sie tun?
      </TellMe>
      <Share>
        <ShareIcon />
        Freigeben
      </Share>
    </TabBar>

    <Ribbon>
      <RibbonGroup $w={189}>
        <GroupBody $pad={5} $gap={4}>
          <RibbonButton $w={101}>
            <IconSlot $lift={2}>
              <PlusBars />
            </IconSlot>
            Diagrammelement
            <ButtonLine>
              hinzufügen
              <Caret $size={2.5} />
            </ButtonLine>
          </RibbonButton>
          <RibbonButton $w={72}>
            <IconSlot $lift={2}>
              <QuickLayout />
            </IconSlot>
            Schnelllayout
            <ButtonLine>
              <Caret $size={2.5} />
            </ButtonLine>
          </RibbonButton>
        </GroupBody>
        <GroupLabel>Diagrammlayouts</GroupLabel>
      </RibbonGroup>

      <RibbonGroup $w={784}>
        <GroupBody>
          <RibbonButton $w={56}>
            <IconSlot $lift={4}>
              <Palette />
            </IconSlot>
            Farben
            <ButtonLine>
              ändern
              <Caret $size={2.5} />
            </ButtonLine>
          </RibbonButton>
          <Gallery>
            <GalleryStrip>
              {thumbs.map(([mode, spread], i) => (
                <ThumbChart key={i} mode={mode} spread={spread} />
              ))}
            </GalleryStrip>
            <GalleryScroll>
              <GalleryStep $off>
                <Caret $up $size={3} $color="#aaa" />
              </GalleryStep>
              <GalleryStep>
                <Caret $size={3} />
              </GalleryStep>
              <GalleryStep>
                <Caret $size={3} />
              </GalleryStep>
            </GalleryScroll>
          </Gallery>
        </GroupBody>
        <GroupLabel>Diagrammformatvorlagen</GroupLabel>
      </RibbonGroup>

      <RibbonGroup $w={138}>
        <GroupBody $pad={6} $gap={1}>
          <RibbonButton $w={64}>
            <IconSlot $lift={6}>
              <SwapTable />
            </IconSlot>
            Zeile/Spalte
            <br />
            wechseln
          </RibbonButton>
          <RibbonButton $w={64}>
            <IconSlot $lift={3}>
              <PickData />
            </IconSlot>
            Daten
            <br />
            auswählen
          </RibbonButton>
        </GroupBody>
        <GroupLabel>Daten</GroupLabel>
      </RibbonGroup>

      <RibbonGroup $w={87}>
        <GroupBody>
          <RibbonButton $w={86}>
            <IconSlot $lift={6}>
              <TypeBars />
            </IconSlot>
            Diagrammtyp
            <br />
            ändern
          </RibbonButton>
        </GroupBody>
        <GroupLabel>Typ</GroupLabel>
      </RibbonGroup>

      <RibbonGroup $w={77}>
        <GroupBody>
          <RibbonButton $w={76}>
            <IconSlot $lift={6}>
              <MoveChart />
            </IconSlot>
            Diagramm
            <br />
            verschieben
          </RibbonButton>
        </GroupBody>
        <GroupLabel>Ort</GroupLabel>
      </RibbonGroup>
      <Collapse>∧</Collapse>
    </Ribbon>

    <FormulaBar>
      <NameBox>
        Diagramm 4
        <Caret $size={3} $color="#777" />
      </NameBox>
      <Dots>⋮</Dots>
      <FormulaTools>
        <span>✕</span>
        <span>✓</span>
        <FxLabel>fx</FxLabel>
      </FormulaTools>
      <FormulaInput>
        <Caret $size={3} $color="#777" />
      </FormulaInput>
    </FormulaBar>

    <Workspace>
      <SheetArea>
        <SheetRow>
          <SheetGrid>
            <SheetCells />

            <ChartBox>
              <FieldRow>
                <FieldButton $w={152}>Summe von Umsatz</FieldButton>
                <FieldButton $w={178}>Summe von Einnahmen</FieldButton>
              </FieldRow>
              <PlotRow>
                <PivotPlot />
                <Legend>
                  <FieldButton $w={191}>Werte</FieldButton>
                  <LegendItem $mt={7}>
                    <LegendSwatch $color="#4159b9" />
                    Summe von Umsatz
                  </LegendItem>
                  <LegendItem $mt={14}>
                    <LegendSwatch $color="#df6c1d" />
                    Summe von Einnahmen
                  </LegendItem>
                </Legend>
              </PlotRow>
              <AxisButtonWrap>
                <FieldButton $w={99.5} $h={27.3} $pr={8}>
                  Verkäufer
                  <Caret $size={3.5} $color="#444" />
                </FieldButton>
              </AxisButtonWrap>
              {handles.map(([x, y]) => (
                <Handle key={`${x}-${y}`} $x={x} $y={y} />
              ))}
            </ChartBox>
            <ChartTool $top={356}>
              <svg width="16" height="16" viewBox="0 0 16 16">
                <path d="M6 1h4v5h5v4h-5v5H6v-5H1V6h5z" fill="#4f9a7e" />
              </svg>
            </ChartTool>
            <ChartTool $top={396}>
              <Brush />
            </ChartTool>
            <MoveCursor />

            <Slicer $x={876} $y={93.7} $w={491.5} $h={215} $line="#a9c48e" $pad={9.5}>
              <SlicerHead $h={38.5} $size={19} $line="#a9c48e" $pb={3}>
                Datum
                <ClearFilter size={21} />
              </SlicerHead>
              <PeriodRow>
                Alle Zeiträume
                <LevelPick>
                  MONATE
                  <Caret $size={4.5} $color="#999" />
                </LevelPick>
              </PeriodRow>
              <YearLabel>2018</YearLabel>
              <MonthRow>
                {monthNames.map((m) => (
                  <span key={m}>{m}</span>
                ))}
              </MonthRow>
              <MonthBar>
                {monthNames.map((m) => (
                  <MonthTick key={m} />
                ))}
              </MonthBar>
              <TimeScroll>
                <TimeButton>
                  <SideArrow $left />
                </TimeButton>
                <TimeThumb />
                <TimeTrack />
                <TimeButton>
                  <SideArrow />
                </TimeButton>
              </TimeScroll>
            </Slicer>

            <Slicer $x={878} $y={334} $w={269.4} $h={393} $line="#a9c48e">
              <SlicerHead $h={38.5} $size={24.5} $line="#a9c48e">
                Monate
                <SlicerTools>
                  <MultiSelect />
                  <ClearFilter />
                </SlicerTools>
              </SlicerHead>
              <SlicerBody>
                <ItemList $w={214}>
                  {months.map((m, i) =>
                    i < 5 ? (
                      <SlicerItem key={i} $bg="#b8dea0" $line="#8ea67c" $color="#16240f">
                        {m}
                      </SlicerItem>
                    ) : (
                      <SlicerItem key={i} $bg="#e3efd9" $line="#d0dbc6" $color="#87947d">
                        {m}
                      </SlicerItem>
                    )
                  )}
                </ItemList>
                <ItemScroll>
                  <ItemStep $h={29}>
                    <svg width="12" height="8" viewBox="0 0 12 8">
                      <path d="M1 7l5-5 5 5" fill="none" stroke="#555" strokeWidth="2" />
                    </svg>
                  </ItemStep>
                  <ItemThumb />
                  <Spring />
                  <ItemStep $h={29}>
                    <svg width="12" height="8" viewBox="0 0 12 8">
                      <path d="M1 1l5 5 5-5" fill="none" stroke="#555" strokeWidth="2" />
                    </svg>
                  </ItemStep>
                </ItemScroll>
              </SlicerBody>
            </Slicer>

            <Slicer $x={1190.4} $y={341.3} $w={269.6} $h={393} $line="#9a9fc0">
              <SlicerHead $h={38.5} $size={24.5} $line="#8d93bb">
                Region
                <SlicerTools>
                  <MultiSelect />
                  <ClearFilter />
                </SlicerTools>
              </SlicerHead>
              <SlicerBody>
                <ItemList $w={244}>
                  {regions.map((m) => (
                    <SlicerItem key={m} $bg="#b0bde6" $line="#8f9ac0" $color="#10182e">
                      {m}
                    </SlicerItem>
                  ))}
                </ItemList>
              </SlicerBody>
            </Slicer>
          </SheetGrid>

          <VScroll>
            <ScrollStep>
              <Caret $up $size={3.5} />
            </ScrollStep>
            <VThumb />
            <Spring />
            <ScrollStep>
              <Caret $size={3.5} />
            </ScrollStep>
          </VScroll>
        </SheetRow>

        <TabStrip>
          <NavArrows>
            <span>‹</span>
            <span>›</span>
          </NavArrows>
          <SheetTab $w={76}>Tabelle3</SheetTab>
          <SheetTab $w={64} $active>
            Pivot1
          </SheetTab>
          <SheetTab $w={75}>Tabelle1</SheetTab>
          <TabDivider />
          <AddSheet>+</AddSheet>
          <HScroll>
            <HDots>⋮</HDots>
            <HButton>
              <SideArrow $left />
            </HButton>
            <HThumb />
            <HTrack />
            <HButton>
              <SideArrow />
            </HButton>
          </HScroll>
        </TabStrip>
      </SheetArea>

      <Panel>
        <PanelTitleRow>
          <PanelTitle>PivotChart-Felder</PanelTitle>
          <PanelActions>
            <Caret $size={4.5} $color="#666" />
            <svg width="12" height="12" viewBox="0 0 12 12">
              <path d="M1 1l10 10M11 1L1 11" stroke="#555" strokeWidth="1.8" />
            </svg>
          </PanelActions>
        </PanelTitleRow>
        <IntroRow>
          <Intro>
            In den Bericht aufzunehmende Felder
            <br />
            auswählen:
          </Intro>
          <GearButton>
            <Gear />
            <Caret $size={3.5} $color="#777" />
          </GearButton>
        </IntroRow>
        <SearchBox>
          Suchen
          <Lens />
        </SearchBox>
        <FieldList>
          {fields.map(([name, on]) => (
            <FieldItem key={name} $on={on}>
              <Check>{on && <Tick />}</Check>
              {name}
            </FieldItem>
          ))}
        </FieldList>
        <DottedRule />
        <HintText>
          Felder zwischen den Bereichen ziehen und
          <br />
          ablegen:
        </HintText>
        <AreaGrid>
          <AreaBlock>
            <AreaLabel $h={22}>
              <FunnelIcon />
              Filter
            </AreaLabel>
            <AreaWell $h={127} $pt={4} />
          </AreaBlock>
          <AreaBlock $side>
            <AreaLabel $h={22}>
              <ColumnsIcon />
              Legende (Reihe)
            </AreaLabel>
            <AreaWell $h={127} $pt={4}>
              <AreaItem>
                <AreaItemText>
                  <Sum>Σ</Sum>
                  Werte
                </AreaItemText>
                <Caret $size={3.5} $color="#555" />
              </AreaItem>
            </AreaWell>
          </AreaBlock>
          <AreaRule />
          <AreaBlock>
            <AreaLabel $h={23} $pb={3}>
              <RowsIcon />
              Achse (Rubriken)
            </AreaLabel>
            <AreaWell $h={125} $pt={1}>
              <AreaItem>
                Verkäufer
                <Caret $size={3.5} $color="#555" />
              </AreaItem>
            </AreaWell>
          </AreaBlock>
          <AreaBlock $side>
            <AreaLabel $h={23} $pb={3}>
              <Sum>Σ</Sum>
              Werte
            </AreaLabel>
            <AreaWell $h={125} $pt={1}>
              <AreaItem $pl={5}>
                Summe von Ums...
                <Caret $size={3.5} $color="#555" />
              </AreaItem>
              <AreaItem $pl={5}>
                Summe von Einn...
                <Caret $size={3.5} $color="#555" />
              </AreaItem>
            </AreaWell>
          </AreaBlock>
        </AreaGrid>
        <PanelFoot>
          <FootLabel>
            <Check />
            Layoutaktualisierung zurüc...
          </FootLabel>
          <RefreshButton>Aktualisieren</RefreshButton>
        </PanelFoot>
      </Panel>
    </Workspace>

    <StatusBar>
      Bereit
      <StatusRight>
        <ViewButton $active>
          <GridIcon />
        </ViewButton>
        <ViewButton>
          <PageIcon />
        </ViewButton>
        <ViewButton>
          <BreakIcon />
        </ViewButton>
        <Zoomer>
          <span>-</span>
          <ZoomTrack>
            <ZoomKnob />
          </ZoomTrack>
          <span>+</span>
        </Zoomer>
        <ZoomValue>140 %</ZoomValue>
      </StatusRight>
    </StatusBar>
  </Page>
);

export default App;
